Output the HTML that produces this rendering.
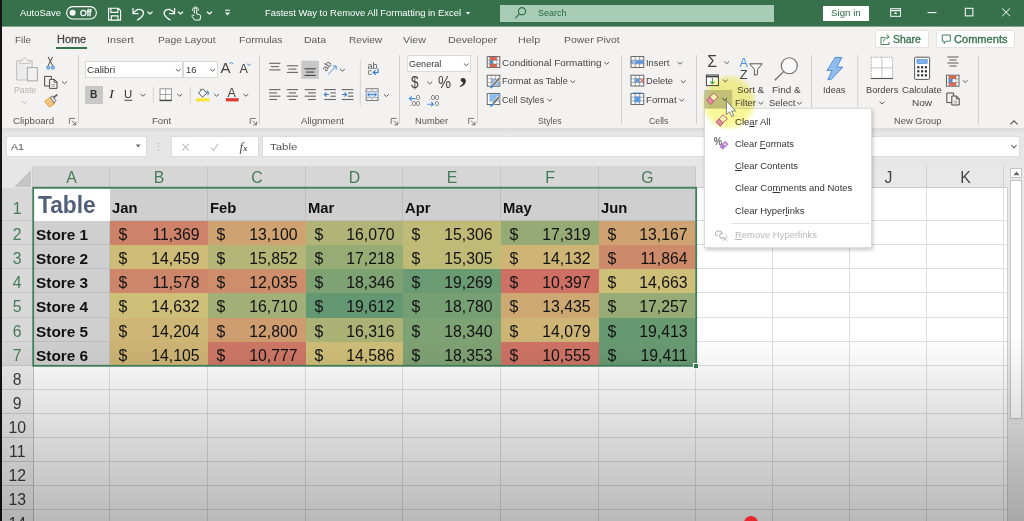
<!DOCTYPE html>
<html lang="en">
<head>
<meta charset="utf-8">
<title>Fastest Way to Remove All Formatting in Excel</title>
<style>
*{box-sizing:border-box;margin:0;padding:0}
html,body{width:1024px;height:521px;overflow:hidden;background:#fff}
body{font-family:"Liberation Sans",sans-serif;font-size:11px;color:#444;position:relative}
#app{position:absolute;left:0;top:0;width:1024px;height:521px;overflow:hidden;background:#fff}
#app div,#app span,#app svg,#app b,#app i{position:absolute}
#app b,#app i{font-style:normal;font-weight:normal}
.lb{white-space:nowrap;transform-origin:0 50%}
.lb u{text-decoration:underline;text-underline-offset:1px}
#title{left:0;top:0;width:1024px;height:26px;background:#36714c}
#search{left:499.5px;top:4.5px;width:274px;height:17.5px;background:#a9ccb7}
#signin{left:823px;top:5.5px;width:46px;height:15px;background:#fff}
#tabs{left:0;top:26px;width:1024px;height:26px;background:#f3f2f1}
#homeul{left:56.2px;top:20.6px;width:30.4px;height:2.6px;background:#35734f}
.btn{background:#fff;border:1px solid #e4e2e0;border-radius:2px}
#ribbon{left:0;top:52px;width:1024px;height:76px;background:#f3f2f1}
.sep{top:55px;width:1px;height:69px;background:#d2d0ce}
.inp{background:#fff;border:1px solid #dadada}
#ribshadow{left:0;top:128px;width:1024px;height:5px;background:linear-gradient(#dcdcdc,#e4e4e4)}
#fbar{left:0;top:132px;width:1024px;height:34px;background:#e6e6e6}
#fbar .box{background:#fff;border:1px solid #dcdcdc;top:4.4px;height:20.6px}
.ch{top:165px;height:23px;background:#e8e8e8;border-right:1px solid #cfcfcf;border-bottom:1px solid #cbcbcb;color:#444;font-size:15.8px;line-height:26.6px;text-align:center;padding-left:1px}
.ch.sel{background:#d6d6d6;color:#467a5a;border-right-color:#c6c6c6}
.rh{left:0;width:33.5px;background:#e8e8e8;border-bottom:1px solid #cfcfcf;border-right:1px solid #c4c4c4;color:#3c3c3c;font-size:15.8px;text-align:center;padding-left:2px}
.rh.sel{background:#d8d8d8;color:#467a5a;border-bottom-color:#c8c8c8}
.vl{top:188px;width:1px;height:333px;background:#dedede}
.hl{left:33px;width:974px;height:1px;background:#dedede}
.dc{color:#121212;font-size:15.8px}
.dc i{left:8.5px;top:1px;line-height:25px}
.dc b{right:8.4px;top:1px;line-height:25px}
.mh{background:#cfcfcf;color:#111;font-weight:bold;font-size:14.8px}
.mh span{left:2px;bottom:3px;line-height:18px}
.st{left:33px;width:76px;background:#cfcfcf;color:#111;font-weight:bold;font-size:15.4px}
.st span{left:3px;top:1px;line-height:25px;white-space:nowrap}
#menu{left:703.6px;top:108px;width:168px;height:140px;background:#fff;border:1px solid #dcdcdc;box-shadow:1px 2px 4px rgba(0,0,0,.22)}
</style>
</head>
<body>
<div id="app">

<!-- ===== sheet ===== -->
<div id="sheet" style="left:0;top:0;width:1024px;height:521px">
<div class="vl" style="left:109px"></div>
<div class="vl" style="left:207px"></div>
<div class="vl" style="left:305px"></div>
<div class="vl" style="left:402px"></div>
<div class="vl" style="left:500px"></div>
<div class="vl" style="left:598px"></div>
<div class="vl" style="left:695px"></div>
<div class="vl" style="left:772px"></div>
<div class="vl" style="left:849px"></div>
<div class="vl" style="left:926px"></div>
<div class="vl" style="left:1003px"></div>
<div class="hl" style="top:220px"></div>
<div class="hl" style="top:244px"></div>
<div class="hl" style="top:268px"></div>
<div class="hl" style="top:292px"></div>
<div class="hl" style="top:317px"></div>
<div class="hl" style="top:341px"></div>
<div class="hl" style="top:365px"></div>
<div class="hl" style="top:389px"></div>
<div class="hl" style="top:413px"></div>
<div class="hl" style="top:437px"></div>
<div class="hl" style="top:461px"></div>
<div class="hl" style="top:485px"></div>
<div class="hl" style="top:509px"></div>
<div class="hl" style="top:533px"></div>
<div class="hl" style="top:557px"></div>
<div style="left:33px;top:188px;width:77px;height:33px;background:#c4c4c4"></div>
<div style="left:110px;top:188px;width:586px;height:33px;background:#bdbdbd"></div>
<div style="left:33px;top:221px;width:77px;height:145px;background:#bdbdbd"></div>
<div style="left:33px;top:189px;width:77px;height:32px;background:#fff"></div>
<div style="left:37.6px;top:190.4px;font-size:24.6px;font-weight:bold;color:#50607a;line-height:30px;white-space:nowrap;transform:scaleX(.925);transform-origin:0 50%">Table</div>
<div class="mh" style="left:110px;top:189px;width:97px;height:31px"><span>Jan</span></div>
<div class="dc" style="left:110px;top:221px;width:98px;height:24px;background:#ce8269"><i>$</i><b>11,369</b></div>
<div class="dc" style="left:110px;top:245px;width:98px;height:24px;background:#cebb77"><i>$</i><b>14,459</b></div>
<div class="dc" style="left:110px;top:269px;width:98px;height:24px;background:#ce866a"><i>$</i><b>11,578</b></div>
<div class="dc" style="left:110px;top:293px;width:98px;height:25px;background:#cebf78"><i>$</i><b>14,632</b></div>
<div class="dc" style="left:110px;top:318px;width:98px;height:24px;background:#ceb776"><i>$</i><b>14,204</b></div>
<div class="dc" style="left:110px;top:342px;width:98px;height:24px;background:#ceb575"><i>$</i><b>14,105</b></div>
<div class="mh" style="left:208px;top:189px;width:97px;height:31px"><span>Feb</span></div>
<div class="dc" style="left:208px;top:221px;width:98px;height:24px;background:#cea271"><i>$</i><b>13,100</b></div>
<div class="dc" style="left:208px;top:245px;width:98px;height:24px;background:#b4b677"><i>$</i><b>15,852</b></div>
<div class="dc" style="left:208px;top:269px;width:98px;height:24px;background:#ce8e6c"><i>$</i><b>12,035</b></div>
<div class="dc" style="left:208px;top:293px;width:98px;height:25px;background:#a2af76"><i>$</i><b>16,710</b></div>
<div class="dc" style="left:208px;top:318px;width:98px;height:24px;background:#ce9d6f"><i>$</i><b>12,800</b></div>
<div class="dc" style="left:208px;top:342px;width:98px;height:24px;background:#ce7766"><i>$</i><b>10,777</b></div>
<div class="mh" style="left:306px;top:189px;width:96px;height:31px"><span>Mar</span></div>
<div class="dc" style="left:306px;top:221px;width:97px;height:24px;background:#b0b476"><i>$</i><b>16,070</b></div>
<div class="dc" style="left:306px;top:245px;width:97px;height:24px;background:#97ab75"><i>$</i><b>17,218</b></div>
<div class="dc" style="left:306px;top:269px;width:97px;height:24px;background:#7fa274"><i>$</i><b>18,346</b></div>
<div class="dc" style="left:306px;top:293px;width:97px;height:25px;background:#649872"><i>$</i><b>19,612</b></div>
<div class="dc" style="left:306px;top:318px;width:97px;height:24px;background:#aab276"><i>$</i><b>16,316</b></div>
<div class="dc" style="left:306px;top:342px;width:97px;height:24px;background:#cebe78"><i>$</i><b>14,586</b></div>
<div class="mh" style="left:403px;top:189px;width:97px;height:31px"><span>Apr</span></div>
<div class="dc" style="left:403px;top:221px;width:98px;height:24px;background:#c0ba77"><i>$</i><b>15,306</b></div>
<div class="dc" style="left:403px;top:245px;width:98px;height:24px;background:#c0ba77"><i>$</i><b>15,305</b></div>
<div class="dc" style="left:403px;top:269px;width:98px;height:24px;background:#6b9b72"><i>$</i><b>19,269</b></div>
<div class="dc" style="left:403px;top:293px;width:98px;height:25px;background:#769f73"><i>$</i><b>18,780</b></div>
<div class="dc" style="left:403px;top:318px;width:98px;height:24px;background:#7fa274"><i>$</i><b>18,340</b></div>
<div class="dc" style="left:403px;top:342px;width:98px;height:24px;background:#7fa274"><i>$</i><b>18,353</b></div>
<div class="mh" style="left:501px;top:189px;width:97px;height:31px"><span>May</span></div>
<div class="dc" style="left:501px;top:221px;width:98px;height:24px;background:#95aa75"><i>$</i><b>17,319</b></div>
<div class="dc" style="left:501px;top:245px;width:98px;height:24px;background:#ceb576"><i>$</i><b>14,132</b></div>
<div class="dc" style="left:501px;top:269px;width:98px;height:24px;background:#ce7064"><i>$</i><b>10,397</b></div>
<div class="dc" style="left:501px;top:293px;width:98px;height:25px;background:#cea872"><i>$</i><b>13,435</b></div>
<div class="dc" style="left:501px;top:318px;width:98px;height:24px;background:#ceb475"><i>$</i><b>14,079</b></div>
<div class="dc" style="left:501px;top:342px;width:98px;height:24px;background:#ce7365"><i>$</i><b>10,555</b></div>
<div class="mh" style="left:599px;top:189px;width:96px;height:31px"><span>Jun</span></div>
<div class="dc" style="left:599px;top:221px;width:97px;height:24px;background:#cea371"><i>$</i><b>13,167</b></div>
<div class="dc" style="left:599px;top:245px;width:97px;height:24px;background:#ce8b6b"><i>$</i><b>11,864</b></div>
<div class="dc" style="left:599px;top:269px;width:97px;height:24px;background:#cebf78"><i>$</i><b>14,663</b></div>
<div class="dc" style="left:599px;top:293px;width:97px;height:25px;background:#96ab75"><i>$</i><b>17,257</b></div>
<div class="dc" style="left:599px;top:318px;width:97px;height:24px;background:#689a72"><i>$</i><b>19,413</b></div>
<div class="dc" style="left:599px;top:342px;width:97px;height:24px;background:#689a72"><i>$</i><b>19,411</b></div>
<div class="st" style="top:221px;height:23.0px"><span>Store 1</span></div>
<div class="st" style="top:245px;height:23.0px"><span>Store 2</span></div>
<div class="st" style="top:269px;height:23.0px"><span>Store 3</span></div>
<div class="st" style="top:293px;height:24.0px"><span>Store 4</span></div>
<div class="st" style="top:318px;height:23.0px"><span>Store 5</span></div>
<div class="st" style="top:342px;height:23.0px"><span>Store 6</span></div>
<div id="corner" style="left:0;top:165px;width:33px;height:23px;background:#e6e6e6;border-right:1px solid #cdcdcd"></div>
<svg style="left:14px;top:170px" width="17" height="17"><polygon points="17,0 17,17 0,17" fill="#c4c4c4"/></svg>
<div class="ch sel" style="left:33px;width:77px">A</div>
<div class="ch sel" style="left:110px;width:98px">B</div>
<div class="ch sel" style="left:208px;width:98px">C</div>
<div class="ch sel" style="left:306px;width:97px">D</div>
<div class="ch sel" style="left:403px;width:98px">E</div>
<div class="ch sel" style="left:501px;width:98px">F</div>
<div class="ch sel" style="left:599px;width:97px">G</div>
<div class="ch" style="left:696px;width:77px">H</div>
<div class="ch" style="left:773px;width:77px">I</div>
<div class="ch" style="left:850px;width:77px">J</div>
<div class="ch" style="left:927px;width:77px">K</div>
<div class="ch" style="left:1004px;width:4px"></div>
<div class="rh sel" style="top:188px;height:33.0px;line-height:41.0px">1</div>
<div class="rh sel" style="top:221px;height:24.0px;line-height:27.6px">2</div>
<div class="rh sel" style="top:245px;height:24.0px;line-height:27.6px">3</div>
<div class="rh sel" style="top:269px;height:24.0px;line-height:27.6px">4</div>
<div class="rh sel" style="top:293px;height:25.0px;line-height:28.6px">5</div>
<div class="rh sel" style="top:318px;height:24.0px;line-height:27.6px">6</div>
<div class="rh sel" style="top:342px;height:24.0px;line-height:27.6px">7</div>
<div class="rh" style="background:#ececec;top:366px;height:24.0px;line-height:27.6px">8</div>
<div class="rh" style="background:#efefef;top:390px;height:24.0px;line-height:27.6px">9</div>
<div class="rh" style="background:#f1f1f1;top:414px;height:24.0px;line-height:27.6px">10</div>
<div class="rh" style="background:#f3f3f3;top:438px;height:24.0px;line-height:27.6px">11</div>
<div class="rh" style="background:#f5f5f5;top:462px;height:24.0px;line-height:27.6px">12</div>
<div class="rh" style="background:#f6f6f6;top:486px;height:24.0px;line-height:27.6px">13</div>
<div class="rh" style="background:#f7f7f7;top:510px;height:24.0px;line-height:27.6px">14</div>
<svg style="left:0;top:0" width="1024" height="521"><rect x="33.2" y="187.7" width="663" height="178.1" fill="none" stroke="#41805c" stroke-width="1.8"/></svg>
<div style="left:693px;top:362.6px;width:6.4px;height:6.4px;background:#3c7a55;border:1px solid #fff"></div>
<!-- vscroll -->
<div style="left:1007px;top:165px;width:17px;height:356px;background:#e8e8e8"></div><div style="left:1007px;top:187.6px;width:1px;height:334px;background:#cdcdcd"></div>
<div style="left:1010.4px;top:179.6px;width:11.6px;height:239.4px;background:#fff;border:1px solid #c4c4c4"></div>
<div style="left:1010.4px;top:167.6px;width:11.6px;height:10.8px;background:#fff;border:1px solid #c4c4c4"></div>
<svg style="left:1013px;top:170.6px" width="7" height="5"><polygon points="3.5,0.5 6.6,4.2 0.4,4.2" fill="#666"/></svg>
</div>

<div id="title">
  <div id="search"></div>
  <div id="signin"></div>
</div>
<div id="tabs">
  <div style="left:0;top:0;width:1024px;height:1px;background:#82a58e"></div>
  <div id="homeul"></div>
  <div class="btn" style="left:875px;top:4px;width:54px;height:18px"></div>
  <div class="btn" style="left:936px;top:4px;width:79px;height:18px"></div>
</div>
<div id="ribbon"></div>
<div class="sep" style="left:78px"></div>
<div class="sep" style="left:259px"></div>
<div class="sep" style="left:399.4px"></div>
<div class="sep" style="left:477px"></div>
<div class="sep" style="left:621.2px"></div>
<div class="sep" style="left:696.4px"></div>
<div id="ribshadow"></div>
<div id="fbar">
  <div class="box" style="left:6px;width:141px"></div>
  <div class="box" style="left:171px;width:88px"></div>
  <div class="box" style="left:262px;width:758px"></div>
</div>
<!-- ribbon boxes -->
<div class="inp" style="left:85.2px;top:60.6px;width:98px;height:17.8px"></div>
<div class="inp" style="left:183.4px;top:60.6px;width:34.2px;height:17.8px"></div>
<div class="inp" style="left:407.2px;top:54.6px;width:64.2px;height:17.6px"></div>
<div style="left:85px;top:86.2px;width:17.6px;height:18px;background:#c8c8c8"></div>

<svg style="left:0;top:0" width="1024" height="170" viewBox="0 0 1024 170">
<rect x="66.6" y="6.6" width="29.8" height="12.4" rx="6.2" stroke="#fff" fill="none" stroke-width="1.1"/><circle cx="72.6" cy="12.8" r="3" fill="#fff"/><path d="M108.6 8.3 H118.3 L120.6 10.6 V20.1 H108.6 Z M110.9 8.3 V12.4 H117.8 V8.3 M111.3 20.1 V15.9 H118 V20.1" stroke="#fff" fill="none" stroke-width="1.1"/><path d="M133 8 V13.6 H138.6 M133.4 13.2 C135.5 9.6 139.5 8.4 142 10.2 C145 12.4 143.6 16.8 137 20.2" stroke="#fff" fill="none" stroke-width="1.2"/><path d="M147.5 11.7 L150.0 13.9 L152.5 11.7" fill="none" stroke="#fff" stroke-width="1.3"/><path d="M174.6 8 V13.6 H169 M174.2 13.2 C172.1 9.6 168.1 8.4 165.6 10.2 C162.6 12.4 164 16.8 170.6 20.2" stroke="#fff" fill="none" stroke-width="1.2"/><path d="M178.0 11.7 L180.5 13.9 L183.0 11.7" fill="none" stroke="#fff" stroke-width="1.3"/><path d="M194.3 13.5 V9.3 a1.2 1.2 0 0 1 2.4 0 V14 l3 .8 a1.2 1.2 0 0 1 .9 1.3 l-.6 3.9 H194.6 l-2.6-3.6 a1 1 0 0 1 1.5-1.2 l.8 .8" stroke="#fff" fill="none" stroke-width="1"/><path d="M192.6 10.8 a3 3 0 1 1 5.8 0" stroke="#fff" fill="none" stroke-width="0.9"/><path d="M207.0 11.7 L209.5 13.9 L212.0 11.7" fill="none" stroke="#fff" stroke-width="1.3"/><path d="M225 10.2 H230" stroke="#fff" stroke-width="1"/><path d="M225 12.6 H230 L227.5 15.4 Z" fill="#fff"/><path d="M465.8 12 H470.2 L468 14.6 Z" fill="#fff"/><circle cx="522" cy="11.2" r="3.6" fill="none" stroke="#2b6a45" stroke-width="1.1"/><path d="M519.4 13.9 L515.2 18.4" stroke="#2b6a45" stroke-width="1.1"/><rect x="890.7" y="8.7" width="9.8" height="7.6" stroke="#fff" fill="none" stroke-width="1"/><path d="M890.7 10.6 H900.5" stroke="#fff" stroke-width="1.2"/><path d="M895.6 11.8 l-1.8 2.2 h3.6 Z" fill="#fff"/><path d="M927.5 12.6 H936.5" stroke="#fff" stroke-width="1"/><rect x="965.3" y="8.3" width="7.6" height="7.6" stroke="#fff" fill="none" stroke-width="1"/><path d="M1002.2 8.4 L1010 16.2 M1010 8.4 L1002.2 16.2" stroke="#fff" stroke-width="1"/><path d="M884.5 37.5 H881 V44.5 H889 V42" stroke="#44805d" fill="none" stroke-width="1"/><path d="M883.6 41.5 C884 38.5 886 36.8 888.6 36.8 M886.6 34.4 L889.4 36.8 L886.6 39.2" stroke="#44805d" fill="none" stroke-width="1"/><path d="M942.3 35 H950.3 V41.2 H946.2 L944.2 43.6 V41.2 H942.3 Z" stroke="#44805d" fill="none" stroke-width="1"/>
<rect x="16.6" y="60.6" width="15.6" height="19.4" rx="1" fill="#ececec" stroke="#c2c2c2" stroke-width="1.1"/><path d="M19.8 63.4 V60.4 H22.4 C22.6 57.4 26.8 57.4 27 60.4 H29.8 V63.4 Z" fill="#f3f2f1" stroke="#c2c2c2" stroke-width="1"/><rect x="27.4" y="67.6" width="10" height="13.2" fill="#f1f1f1" stroke="#b2b2b2" stroke-width="1.2"/><path d="M22.2 101.3 L24.6 103.5 L27.0 101.3" fill="none" stroke="#c0c0c0" stroke-width="1.0"/><path d="M48.1 56.8 L52.6 65.8 M52.5 56.8 L48 65.8" stroke="#4a4a4a" stroke-width="1"/><circle cx="48.3" cy="67.6" r="1.5" fill="#a9cdf2" stroke="#3b7fd0" stroke-width="1"/><circle cx="52.9" cy="67.6" r="1.5" fill="#a9cdf2" stroke="#3b7fd0" stroke-width="1"/><path d="M49.4 86 H44.6 V76.4 H51.4 V79" fill="none" stroke="#4a4a4a" stroke-width="1"/><path d="M49.6 79.4 H54.4 L57 82 V88.4 H49.6 Z M54.2 79.6 V82.2 H56.8" fill="none" stroke="#4a4a4a" stroke-width="1"/><path d="M51.6 84.6 H55 M51.6 86.2 H55" stroke="#8a8a8a" stroke-width="0.7"/><path d="M62.1 81.5 L64.5 83.7 L66.9 81.5" fill="none" stroke="#5c5c5c" stroke-width="1.0"/><path d="M44.8 101.2 L50.6 97.2 L54.2 103.8 L49.4 107 Z" fill="#f8cf95" stroke="#e89224" stroke-width="1" stroke-linejoin="round"/><path d="M47.6 102.4 L50.8 105.2 M49.6 100.6 L52.6 104" stroke="#e89224" stroke-width="0.7"/><path d="M50.4 97.4 L53 95.8 L55.8 100.8 L54 103.2 Z" fill="#e9e9e9" stroke="#666" stroke-width="0.9" stroke-linejoin="round"/><path d="M53.8 97.4 L56.8 95" stroke="#666" stroke-width="1.8" stroke-linecap="round"/><path d="M69.4 123.9 V118.4 H74.9" fill="none" stroke="#6a6a6a" stroke-width="0.9"/><path d="M71.7 120.7 L75.60000000000001 124.60000000000001 M75.80000000000001 121.60000000000001 V124.80000000000001 H72.60000000000001" fill="none" stroke="#6a6a6a" stroke-width="0.9"/><path d="M175.9 69.1 L178.3 71.2 L180.7 69.1" fill="none" stroke="#5c5c5c" stroke-width="1.0"/><path d="M210.2 69.1 L212.6 71.2 L215.0 69.1" fill="none" stroke="#5c5c5c" stroke-width="1.0"/><path d="M229.6 64 L231.4 62 L233.2 64" fill="none" stroke="#3b7fd0" stroke-width="0.9"/><path d="M247.2 63.6 L249 65.6 L250.8 63.6" fill="none" stroke="#3b7fd0" stroke-width="0.9"/><path d="M124.6 100.3 H132.2" stroke="#333" stroke-width="0.9"/><path d="M140.6 94.1 L143.0 96.2 L145.4 94.1" fill="none" stroke="#5c5c5c" stroke-width="1.0"/><path d="M153.3 87 V103.4 M190.3 87 V103.4" stroke="#d4d2d0" stroke-width="1"/><rect x="160" y="88.8" width="11.4" height="11.4" fill="#fff" stroke="#8c8c8c" stroke-width="0.9"/><path d="M165.7 88.8 V100.2 M160 94.5 H171.4" stroke="#8c8c8c" stroke-width="0.8"/><path d="M159.6 100.5 H171.8" stroke="#444" stroke-width="1.3"/><path d="M177.3 94.1 L179.7 96.2 L182.1 94.1" fill="none" stroke="#5c5c5c" stroke-width="1.0"/><path d="M198.6 93 L202.6 88.8 L206.8 93 L202.6 97 Z" fill="#fff" stroke="#4a4a4a" stroke-width="1"/><path d="M201.4 90 L200.2 88.8" stroke="#4a4a4a" stroke-width="1"/><path d="M207.2 91 c1.3 1.6 1.7 2.8 .2 3.8" fill="none" stroke="#3b7fd0" stroke-width="1.3"/><rect x="196.2" y="98.2" width="13.2" height="3.2" fill="#f5e53a"/><path d="M214.2 94.1 L216.6 96.2 L219.0 94.1" fill="none" stroke="#5c5c5c" stroke-width="1.0"/><rect x="225.8" y="98.2" width="12.8" height="3.2" fill="#e0382e"/><path d="M243.5 94.1 L245.9 96.2 L248.3 94.1" fill="none" stroke="#5c5c5c" stroke-width="1.0"/><path d="M250.2 123.9 V118.4 H255.7" fill="none" stroke="#6a6a6a" stroke-width="0.9"/><path d="M252.5 120.7 L256.4 124.60000000000001 M256.59999999999997 121.60000000000001 V124.80000000000001 H253.39999999999998" fill="none" stroke="#6a6a6a" stroke-width="0.9"/><path d="M269.2 63.3 H280.4" stroke="#666" stroke-width="1.1"/><path d="M270.8 66.6 H278.8" stroke="#666" stroke-width="1.1"/><path d="M269.2 69.9 H280.4" stroke="#666" stroke-width="1.1"/><path d="M286.8 65.8 H298" stroke="#666" stroke-width="1.1"/><path d="M288.4 69.1 H296.4" stroke="#666" stroke-width="1.1"/><path d="M286.8 72.4 H298" stroke="#666" stroke-width="1.1"/><rect x="301.3" y="60.7" width="17.6" height="18.2" fill="#c8c8c8"/><path d="M304.6 68.8 H315.8" stroke="#444" stroke-width="1.1"/><path d="M306.2 72.1 H314.2" stroke="#444" stroke-width="1.1"/><path d="M304.6 75.4 H315.8" stroke="#444" stroke-width="1.1"/><path d="M328 74.6 L336 66.2 M332.6 66 H336.2 V69.6" fill="none" stroke="#4a90dc" stroke-width="0.95"/><path d="M340.0 69.1 L342.4 71.2 L344.8 69.1" fill="none" stroke="#5c5c5c" stroke-width="1.0"/><path d="M360.3 59.8 V105.5" stroke="#d4d2d0" stroke-width="1"/><path d="M378 68.4 V72.6 H373.6 M375.6 70.4 L373.2 72.6 L375.6 74.8" fill="none" stroke="#3b7fd0" stroke-width="1.2"/><path d="M269.2 89.6 H280.4" stroke="#666" stroke-width="1.1"/><path d="M269.2 92.9 H277" stroke="#666" stroke-width="1.1"/><path d="M269.2 96.2 H280.4" stroke="#666" stroke-width="1.1"/><path d="M269.2 99.5 H277" stroke="#666" stroke-width="1.1"/><path d="M286.8 89.6 H298" stroke="#666" stroke-width="1.1"/><path d="M288.8 92.9 H296" stroke="#666" stroke-width="1.1"/><path d="M286.8 96.2 H298" stroke="#666" stroke-width="1.1"/><path d="M288.8 99.5 H296" stroke="#666" stroke-width="1.1"/><path d="M304.6 89.6 H315.8" stroke="#666" stroke-width="1.1"/><path d="M308 92.9 H315.8" stroke="#666" stroke-width="1.1"/><path d="M304.6 96.2 H315.8" stroke="#666" stroke-width="1.1"/><path d="M308 99.5 H315.8" stroke="#666" stroke-width="1.1"/><path d="M324.2 89.6 H335.8" stroke="#666" stroke-width="1.1"/><path d="M330.4 92.9 H335.8" stroke="#666" stroke-width="1.1"/><path d="M330.4 96.2 H335.8" stroke="#666" stroke-width="1.1"/><path d="M324.2 99.5 H335.8" stroke="#666" stroke-width="1.1"/><path d="M324.4 94.5 H329 M326.4 92.5 L324.4 94.5 L326.4 96.5" fill="none" stroke="#3b7fd0" stroke-width="1.1"/><path d="M341.8 89.6 H353.4" stroke="#666" stroke-width="1.1"/><path d="M348 92.9 H353.4" stroke="#666" stroke-width="1.1"/><path d="M348 96.2 H353.4" stroke="#666" stroke-width="1.1"/><path d="M341.8 99.5 H353.4" stroke="#666" stroke-width="1.1"/><path d="M341.8 94.5 H346.6 M344.6 92.5 L346.6 94.5 L344.6 96.5" fill="none" stroke="#3b7fd0" stroke-width="1.1"/><rect x="366.2" y="88.8" width="11.8" height="11.6" fill="#fff" stroke="#666" stroke-width="0.9"/><rect x="366.6" y="91.6" width="11" height="6" fill="#cfe2f7"/><path d="M366.2 91.4 H378 M366.2 97.8 H378 M372.1 88.8 V91.4 M372.1 97.8 V100.4" stroke="#888" stroke-width="0.7"/><path d="M367.8 94.6 H376.4 M369.6 92.9 L367.8 94.6 L369.6 96.3 M374.6 92.9 L376.4 94.6 L374.6 96.3" fill="none" stroke="#3b7fd0" stroke-width="1"/><path d="M384.0 94.3 L386.4 96.5 L388.8 94.3" fill="none" stroke="#5c5c5c" stroke-width="1.0"/><path d="M391.2 123.9 V118.4 H396.7" fill="none" stroke="#6a6a6a" stroke-width="0.9"/><path d="M393.5 120.7 L397.4 124.60000000000001 M397.59999999999997 121.60000000000001 V124.80000000000001 H394.4" fill="none" stroke="#6a6a6a" stroke-width="0.9"/><path d="M463.9 63.5 L466.3 65.7 L468.7 63.5" fill="none" stroke="#5c5c5c" stroke-width="1.0"/><path d="M427.3 81.7 L429.7 83.9 L432.1 81.7" fill="none" stroke="#5c5c5c" stroke-width="1.0"/><path d="M409.4 98.6 H415.6 M411.6 96.4 L409.4 98.6 L411.6 100.8" fill="none" stroke="#4a90dc" stroke-width="1.1"/><path d="M427.2 104.2 H433.4 M431.2 102 L433.4 104.2 L431.2 106.4" fill="none" stroke="#4a90dc" stroke-width="1.1"/><path d="M468.6 123.9 V118.4 H474.1" fill="none" stroke="#6a6a6a" stroke-width="0.9"/><path d="M470.90000000000003 120.7 L474.8 124.60000000000001 M475.0 121.60000000000001 V124.80000000000001 H471.8" fill="none" stroke="#6a6a6a" stroke-width="0.9"/><rect x="487.2" y="56.6" width="12.6" height="11" fill="#fff" stroke="#555" stroke-width="0.9"/><rect x="489.8" y="57.0" width="7" height="3.3" fill="#e8614d"/><rect x="489.8" y="64.0" width="7" height="3.2" fill="#e8614d"/><rect x="489.8" y="60.5" width="3.2" height="3.3" fill="#4a86d8"/><path d="M487.2 60.300000000000004 H499.8 M487.2 63.9 H499.8 M489.7 56.6 V67.6 M493.09999999999997 56.6 V67.6 M496.9 56.6 V67.6" stroke="#777" stroke-width="0.55"/><path d="M604.2 62.1 L606.6 64.2 L609.0 62.1" fill="none" stroke="#5c5c5c" stroke-width="1.0"/><rect x="487.2" y="75.2" width="12.6" height="11" fill="#fff" stroke="#555" stroke-width="0.9"/><rect x="491.4" y="79" width="8" height="6.8" fill="#8bbcf0"/><path d="M487.2 78.8 H499.8 M487.2 82.4 H499.8 M491.2 75.2 V86.2 M495.4 75.2 V86.2" stroke="#777" stroke-width="0.55"/><path d="M493 85.2 L499.2 78.6" stroke="#fff" stroke-width="3.4"/><path d="M493 85.2 L499.2 78.6" stroke="#7a7a7a" stroke-width="2.2"/><path d="M490.4 87.8 c.4 -2 1.6 -2.8 3 -2 c-.4 1.6 -1.6 2.2 -3 2z" fill="#3b86d6" stroke="#3b86d6" stroke-width="0.6"/><path d="M570.4 80.5 L572.8 82.7 L575.2 80.5" fill="none" stroke="#5c5c5c" stroke-width="1.0"/><rect x="487.2" y="93.6" width="12.6" height="11" fill="#fff" stroke="#555" stroke-width="0.9"/><rect x="489.4" y="94.2" width="10" height="7.4" fill="#8bbcf0"/><path d="M493 103.6 L499.2 97" stroke="#fff" stroke-width="3.4"/><path d="M493 103.6 L499.2 97" stroke="#7a7a7a" stroke-width="2.2"/><path d="M490.4 106.2 c.4 -2 1.6 -2.8 3 -2 c-.4 1.6 -1.6 2.2 -3 2z" fill="#3b86d6" stroke="#3b86d6" stroke-width="0.6"/><path d="M547.4 99.0 L549.8 101.2 L552.2 99.0" fill="none" stroke="#5c5c5c" stroke-width="1.0"/><rect x="631" y="56.6" width="12.8" height="10.8" fill="#fff" stroke="#555" stroke-width="0.9"/><path d="M631 60.2 H643.8 M631 63.800000000000004 H643.8 M635.2 56.6 V67.4 M639.6 56.6 V67.4" stroke="#666" stroke-width="0.6"/><rect x="635.4" y="60.3" width="8.2" height="3.4" fill="#5b9be0"/><path d="M631.2 62 H635 M632.8 60.4 L631.2 62 L632.8 63.6" fill="none" stroke="#3b7fd0" stroke-width="0.9"/><path d="M677.6 62.1 L680.0 64.2 L682.4 62.1" fill="none" stroke="#5c5c5c" stroke-width="1.0"/><rect x="631" y="75.2" width="12.8" height="10.8" fill="#fff" stroke="#555" stroke-width="0.9"/><path d="M631 78.8 H643.8 M631 82.4 H643.8 M635.2 75.2 V86.0 M639.6 75.2 V86.0" stroke="#666" stroke-width="0.6"/><rect x="634.6" y="78.6" width="4.6" height="3.8" fill="#5b9be0"/><path d="M640.2 78.6 L643.8 82.4 M643.8 78.6 L640.2 82.4" stroke="#e0382e" stroke-width="1"/><path d="M680.9 80.5 L683.3 82.7 L685.7 80.5" fill="none" stroke="#5c5c5c" stroke-width="1.0"/><rect x="631" y="93.6" width="12.8" height="10.8" fill="#fff" stroke="#555" stroke-width="0.9"/><path d="M631 97.19999999999999 H643.8 M631 100.8 H643.8 M635.2 93.6 V104.39999999999999 M639.6 93.6 V104.39999999999999" stroke="#666" stroke-width="0.6"/><rect x="634.4" y="96.4" width="6" height="6" fill="#5b9be0"/><path d="M633 93 H642" stroke="#3b7fd0" stroke-width="0.9"/><path d="M679.3 99.0 L681.7 101.2 L684.1 99.0" fill="none" stroke="#5c5c5c" stroke-width="1.0"/><path d="M724.3 61.5 L726.7 63.7 L729.1 61.5" fill="none" stroke="#5c5c5c" stroke-width="1.0"/><rect x="706.4" y="75" width="12" height="10.6" fill="#fff" stroke="#444" stroke-width="1"/><path d="M706.4 76.6 H718.4" stroke="#444" stroke-width="1.6"/><path d="M712.4 78 V83.6 M710.2 81.6 L712.4 83.8 L714.6 81.6" fill="none" stroke="#3aa05a" stroke-width="1.1"/><path d="M722.9 79.7 L725.3 81.9 L727.7 79.7" fill="none" stroke="#5c5c5c" stroke-width="1.0"/><rect x="704" y="90" width="28.2" height="18.7" fill="#c6c6c6"/><path d="M722.4 98.3 L724.8 100.5 L727.2 98.3" fill="none" stroke="#333" stroke-width="1.0"/><path d="M749.6 63.8 H762.2 L757.4 69.4 V74.6 L754.4 75.2 V69.4 Z" fill="#f9f9f9" stroke="#555" stroke-width="1"/><path d="M758.4 102.1 L760.8 104.2 L763.2 102.1" fill="none" stroke="#5c5c5c" stroke-width="1.0"/><path d="M797.0 102.1 L799.4 104.2 L801.8 102.1" fill="none" stroke="#5c5c5c" stroke-width="1.0"/><circle cx="789.3" cy="65.8" r="8" fill="#f8f8f8" stroke="#6a6a6a" stroke-width="1.1"/><path d="M783.6 71.6 L774.8 80.2" stroke="#6a6a6a" stroke-width="1.2"/><path d="M811.5 55 V124 M857.7 55 V124 M978.4 55 V124" stroke="#d2d0ce" stroke-width="1"/><path d="M835.2 57.4 H841.9 L836.8 67.1 H842.9 L831.1 79.6 H827.8 L832.1 70.5 H827 Z" fill="#8fbdee" stroke="#4a86cf" stroke-width="0.9" stroke-linejoin="round"/><rect x="871.2" y="57.2" width="21.4" height="21.2" fill="#fff" stroke="#9a9a9a" stroke-width="0.9" stroke-dasharray="1.2 1"/><path d="M881.9 57.2 V78.4 M871.2 67.8 H892.6" stroke="#b5b5b5" stroke-width="0.8"/><path d="M870.8 78.5 H893" stroke="#555" stroke-width="1.1"/><path d="M879.6 101.7 L882.0 103.9 L884.4 101.7" fill="none" stroke="#5c5c5c" stroke-width="1.0"/><rect x="914.6" y="57.2" width="15" height="22.2" rx="1" fill="#fff" stroke="#555" stroke-width="1"/><rect x="917" y="59.6" width="10.2" height="3.8" fill="#7fb2ea" stroke="#3b7fd0" stroke-width="0.6"/><rect x="917.2" y="66.2" width="2.2" height="2.2" fill="#333"/><rect x="921.0" y="66.2" width="2.2" height="2.2" fill="#333"/><rect x="924.8" y="66.2" width="2.2" height="2.2" fill="#333"/><rect x="917.2" y="70.2" width="2.2" height="2.2" fill="#333"/><rect x="921.0" y="70.2" width="2.2" height="2.2" fill="#333"/><rect x="924.8" y="70.2" width="2.2" height="2.2" fill="#333"/><rect x="917.2" y="74.2" width="2.2" height="2.2" fill="#333"/><rect x="921.0" y="74.2" width="2.2" height="2.2" fill="#333"/><rect x="924.8" y="74.2" width="2.2" height="2.2" fill="#333"/><path d="M947.4 57 H958.6" stroke="#666" stroke-width="1.1"/><path d="M949.4 60 H956.6" stroke="#666" stroke-width="1.1"/><path d="M947.4 63 H958.6" stroke="#666" stroke-width="1.1"/><path d="M949.4 66 H956.6" stroke="#666" stroke-width="1.1"/><rect x="946.4" y="75.2" width="12.6" height="11" fill="#fff" stroke="#555" stroke-width="0.9"/><rect x="949.0" y="75.60000000000001" width="7" height="3.3" fill="#e8614d"/><rect x="949.0" y="82.60000000000001" width="7" height="3.2" fill="#e8614d"/><rect x="949.0" y="79.10000000000001" width="3.2" height="3.3" fill="#4a86d8"/><path d="M946.4 78.9 H959.0 M946.4 82.5 H959.0 M948.9 75.2 V86.2 M952.3 75.2 V86.2 M956.1 75.2 V86.2" stroke="#777" stroke-width="0.55"/><path d="M962.8 80.3 L965.2 82.5 L967.6 80.3" fill="none" stroke="#5c5c5c" stroke-width="1.0"/><path d="M951.6 102.6 H946.8 V93 H953.6 V95.6" fill="none" stroke="#4a4a4a" stroke-width="1"/><path d="M951.8 96 H956.6 L959.2 98.6 V105 H951.8 Z M956.4 96.2 V98.8 H959" fill="none" stroke="#4a4a4a" stroke-width="1"/><path d="M953.8 101.2 H957.2 M953.8 102.8 H957.2" stroke="#8a8a8a" stroke-width="0.7"/><path d="M1010.4 124.4 L1014 120.8 L1017.6 124.4" fill="none" stroke="#555" stroke-width="1.1"/>
<!-- formula bar icons -->
<path d="M135.8 144.6 H140.6 L138.2 147.4 Z" fill="#666"/>
<path d="M158.4 143.3 v.01 M158.4 146.8 v.01 M158.4 150.3 v.01" stroke="#aaa" stroke-width="1.3" stroke-linecap="round"/>
<path d="M182.4 143.9 L188.8 150.5 M188.8 143.9 L182.4 150.5" stroke="#c4c4c4" stroke-width="1.1"/>
<path d="M211 147.6 L213.4 150.6 L218.2 143.6" fill="none" stroke="#c4c4c4" stroke-width="1.1"/>
<path d="M1011.4 145 L1014 147.8 L1016.6 145" fill="none" stroke="#555" stroke-width="1.1"/>
</svg>

<!-- icon-like letters (real text) -->
<span class="lb" style="left:220.6px;top:59.4px;font-size:15px;line-height:18px;color:#444">A</span>
<span class="lb" style="left:239.6px;top:61.6px;font-size:12.5px;line-height:15px;color:#444">A</span>
<span class="lb" style="left:227.6px;top:86px;font-size:12.5px;line-height:15px;color:#444">A</span>
<span class="lb" style="left:707.2px;top:52.6px;font-size:16px;line-height:18px;color:#444">Σ</span>
<span class="lb" style="left:739.6px;top:56.2px;font-size:12.5px;line-height:15px;color:#4a92dc">A</span>
<span class="lb" style="left:739.8px;top:66.8px;font-size:12.8px;line-height:15px;color:#4a4a4a">Z</span>
<span class="lb" style="left:459.6px;top:56.8px;font-size:30px;line-height:30px;color:#333;font-family:'Liberation Serif',serif;font-weight:bold">,</span>
<span class="lb" style="left:367.6px;top:62.2px;font-size:9px;line-height:9px;color:#555">ab</span>
<span class="lb" style="left:367.6px;top:68.4px;font-size:9px;line-height:9px;color:#555">c</span>
<span class="lb" style="left:322.2px;top:61.8px;font-size:9px;line-height:9px;color:#555;transform:rotate(-58deg);transform-origin:50% 50%">ab</span>
<span class="lb" style="left:416.2px;top:94px;font-size:8px;line-height:8px;color:#555;transform:scaleX(.9)">0</span>
<span class="lb" style="left:410.4px;top:100.4px;font-size:8px;line-height:8px;color:#555;transform:scaleX(.9)">.00</span>
<span class="lb" style="left:428.6px;top:94px;font-size:8px;line-height:8px;color:#555;transform:scaleX(.9)">.00</span>
<span class="lb" style="left:434.6px;top:100.4px;font-size:8px;line-height:8px;color:#555;transform:scaleX(.9)">0</span>
<span class="lb" style="left:239.6px;top:139.6px;font-size:13px;line-height:14px;color:#505050;font-family:'Liberation Serif',serif;font-style:italic;font-weight:bold"><i style="position:static;font-style:italic">f</i><span style="position:static;font-size:8.5px">x</span></span>

<span class="lb" style="left:19.5px;top:7.1px;font-size:9.4px;line-height:12px;color:#fff;font-weight:normal;transform:scaleX(1.008);">AutoSave</span>
<span class="lb" style="left:80.2px;top:7.6px;font-size:8.6px;line-height:11px;color:#fff;font-weight:normal;transform:scaleX(0.999);-webkit-text-stroke:0.35px #fff">Off</span>
<span class="lb" style="left:264.7px;top:7.1px;font-size:9.4px;line-height:12px;color:#fff;font-weight:normal;transform:scaleX(1.005);">Fastest Way to Remove All Formatting in Excel</span>
<span class="lb" style="left:538.0px;top:7.1px;font-size:9.4px;line-height:12px;color:#2b6a45;font-weight:normal;transform:scaleX(0.959);">Search</span>
<span class="lb" style="left:831.0px;top:7.1px;font-size:9.4px;line-height:12px;color:#2b6a45;font-weight:normal;transform:scaleX(1.036);">Sign in</span>
<span class="lb" style="left:14.7px;top:32.8px;font-size:9.8px;line-height:13px;color:#5a5a5a;font-weight:normal;transform:scaleX(1.019);">File</span>
<span class="lb" style="left:107.2px;top:32.8px;font-size:9.8px;line-height:13px;color:#5a5a5a;font-weight:normal;transform:scaleX(1.089);">Insert</span>
<span class="lb" style="left:157.8px;top:32.8px;font-size:9.8px;line-height:13px;color:#5a5a5a;font-weight:normal;transform:scaleX(1.048);">Page Layout</span>
<span class="lb" style="left:238.6px;top:32.8px;font-size:9.8px;line-height:13px;color:#5a5a5a;font-weight:normal;transform:scaleX(1.067);">Formulas</span>
<span class="lb" style="left:304.4px;top:32.8px;font-size:9.8px;line-height:13px;color:#5a5a5a;font-weight:normal;transform:scaleX(1.058);">Data</span>
<span class="lb" style="left:349.2px;top:32.8px;font-size:9.8px;line-height:13px;color:#5a5a5a;font-weight:normal;transform:scaleX(1.033);">Review</span>
<span class="lb" style="left:403.3px;top:32.8px;font-size:9.8px;line-height:13px;color:#5a5a5a;font-weight:normal;transform:scaleX(1.087);">View</span>
<span class="lb" style="left:447.8px;top:32.8px;font-size:9.8px;line-height:13px;color:#5a5a5a;font-weight:normal;transform:scaleX(1.097);">Developer</span>
<span class="lb" style="left:518.4px;top:32.8px;font-size:9.8px;line-height:13px;color:#5a5a5a;font-weight:normal;transform:scaleX(1.101);">Help</span>
<span class="lb" style="left:563.5px;top:32.8px;font-size:9.8px;line-height:13px;color:#5a5a5a;font-weight:normal;transform:scaleX(1.067);">Power Pivot</span>
<span class="lb" style="left:56.5px;top:32.8px;font-size:10px;line-height:13px;color:#484848;font-weight:normal;transform:scaleX(1.094);-webkit-text-stroke:0.28px #484848">Home</span>
<span class="lb" style="left:893.0px;top:32.8px;font-size:10.2px;line-height:13px;color:#3a7552;font-weight:normal;transform:scaleX(1.019);-webkit-text-stroke:0.35px #3a7552">Share</span>
<span class="lb" style="left:953.5px;top:32.8px;font-size:10.2px;line-height:13px;color:#3a7552;font-weight:normal;transform:scaleX(1.086);-webkit-text-stroke:0.35px #3a7552">Comments</span>
<span class="lb" style="left:12.6px;top:115.4px;font-size:9.3px;line-height:12px;color:#555;font-weight:normal;transform:scaleX(1.033);">Clipboard</span>
<span class="lb" style="left:152.0px;top:115.4px;font-size:9.3px;line-height:12px;color:#555;font-weight:normal;transform:scaleX(1.032);">Font</span>
<span class="lb" style="left:301.2px;top:115.4px;font-size:9.3px;line-height:12px;color:#555;font-weight:normal;transform:scaleX(1.040);">Alignment</span>
<span class="lb" style="left:415.1px;top:115.4px;font-size:9.3px;line-height:12px;color:#555;font-weight:normal;transform:scaleX(1.001);">Number</span>
<span class="lb" style="left:537.5px;top:115.4px;font-size:9.3px;line-height:12px;color:#555;font-weight:normal;transform:scaleX(0.932);">Styles</span>
<span class="lb" style="left:649.0px;top:115.4px;font-size:9.3px;line-height:12px;color:#555;font-weight:normal;transform:scaleX(0.938);">Cells</span>
<span class="lb" style="left:894.0px;top:115.4px;font-size:9.3px;line-height:12px;color:#555;font-weight:normal;transform:scaleX(1.008);">New Group</span>
<span class="lb" style="left:13.6px;top:84.0px;font-size:9.3px;line-height:12px;color:#b4b4b4;font-weight:normal;transform:scaleX(0.946);">Paste</span>
<span class="lb" style="left:86.8px;top:63.5px;font-size:9.3px;line-height:12px;color:#333;font-weight:normal;transform:scaleX(1.066);">Calibri</span>
<span class="lb" style="left:185.7px;top:63.5px;font-size:9.3px;line-height:12px;color:#333;font-weight:normal;transform:scaleX(0.996);">16</span>
<span class="lb" style="left:408.9px;top:57.9px;font-size:9.3px;line-height:12px;color:#333;font-weight:normal;transform:scaleX(0.976);">General</span>
<span class="lb" style="left:502.1px;top:56.7px;font-size:9.3px;line-height:12px;color:#444;font-weight:normal;transform:scaleX(1.063);">Conditional Formatting</span>
<span class="lb" style="left:502.1px;top:75.0px;font-size:9.3px;line-height:12px;color:#444;font-weight:normal;transform:scaleX(0.989);">Format as Table</span>
<span class="lb" style="left:502.1px;top:93.5px;font-size:9.3px;line-height:12px;color:#444;font-weight:normal;transform:scaleX(0.963);">Cell Styles</span>
<span class="lb" style="left:645.9px;top:56.7px;font-size:9.3px;line-height:12px;color:#444;font-weight:normal;transform:scaleX(1.001);">Insert</span>
<span class="lb" style="left:645.9px;top:75.0px;font-size:9.3px;line-height:12px;color:#444;font-weight:normal;transform:scaleX(1.001);">Delete</span>
<span class="lb" style="left:645.9px;top:93.5px;font-size:9.3px;line-height:12px;color:#444;font-weight:normal;transform:scaleX(1.039);">Format</span>
<span class="lb" style="left:736.8px;top:84.0px;font-size:9.3px;line-height:12px;color:#444;font-weight:normal;transform:scaleX(1.049);">Sort &amp;</span>
<span class="lb" style="left:735.2px;top:96.5px;font-size:9.3px;line-height:12px;color:#444;font-weight:normal;transform:scaleX(1.016);">Filter</span>
<span class="lb" style="left:771.5px;top:84.0px;font-size:9.3px;line-height:12px;color:#444;font-weight:normal;transform:scaleX(1.064);">Find &amp;</span>
<span class="lb" style="left:768.9px;top:96.5px;font-size:9.3px;line-height:12px;color:#444;font-weight:normal;transform:scaleX(1.018);">Select</span>
<span class="lb" style="left:823.2px;top:84.0px;font-size:9.3px;line-height:12px;color:#444;font-weight:normal;transform:scaleX(0.985);">Ideas</span>
<span class="lb" style="left:865.9px;top:84.0px;font-size:9.3px;line-height:12px;color:#444;font-weight:normal;transform:scaleX(0.992);">Borders</span>
<span class="lb" style="left:902.1px;top:84.0px;font-size:9.3px;line-height:12px;color:#444;font-weight:normal;transform:scaleX(1.024);">Calculate</span>
<span class="lb" style="left:911.7px;top:96.5px;font-size:9.3px;line-height:12px;color:#444;font-weight:normal;transform:scaleX(1.080);">Now</span>
<span class="lb" style="left:89.8px;top:87.3px;font-size:11.5px;line-height:15px;color:#333;font-weight:bold;transform:scaleX(0.890);">B</span>
<span class="lb" style="left:108.8px;top:87.3px;font-size:11.5px;line-height:15px;color:#333;font-weight:normal;transform:scaleX(1.301);font-family:'Liberation Serif',serif;font-style:italic">I</span>
<span class="lb" style="left:124.0px;top:86.8px;font-size:11.5px;line-height:15px;color:#333;font-weight:normal;transform:scaleX(0.986);">U</span>
<span class="lb" style="left:411.0px;top:71.6px;font-size:17px;line-height:22px;color:#444;font-weight:normal;transform:scaleX(0.803);">$</span>
<span class="lb" style="left:438.3px;top:71.9px;font-size:16px;line-height:21px;color:#444;font-weight:normal;transform:scaleX(0.920);">%</span>
<span class="lb" style="left:11.2px;top:141.2px;font-size:9.6px;line-height:12px;color:#555;font-weight:normal;transform:scaleX(1.106);">A1</span>
<span class="lb" style="left:270.2px;top:141.2px;font-size:9.6px;line-height:12px;color:#555;font-weight:normal;transform:scaleX(1.190);">Table</span>

<div id="menu"></div>
<div style="left:731.3px;top:223px;width:139px;height:1px;background:#e2e2e2"></div>
<svg style="left:0;top:0" width="1024" height="260" viewBox="0 0 1024 260">
<path d="M719.8 146.5 L725.3 141.3 L728 144.3 L722.8 149.3 Z" fill="#b67fd2" stroke="#a568c6" stroke-width="0.6" stroke-linejoin="round"/><path d="M723.6 144.6 L725.3 143 L726.4 144.2 L724.7 145.8 Z" fill="#f4eaf9"/><path d="M722.6 233.6 C721.8 231.2 718.4 230.4 716.4 231.6 C714.4 233 714.8 235.4 717.6 236" fill="none" stroke="#b4b4b4" stroke-width="1.1" stroke-linecap="round"/><path d="M721.4 233.4 C719.4 234 719 236.4 720.6 237.8 C721.4 238.4 722.2 238.6 723 238.4" fill="none" stroke="#b4b4b4" stroke-width="1.1" stroke-linecap="round"/><path d="M722.8 236.6 L727.4 240.8 M727.4 236.6 L722.8 240.8" stroke="#b4b4b4" stroke-width="1"/><path d="M725.4 233.8 v.01 M726.2 235.2 v.01" stroke="#b4b4b4" stroke-width="1" stroke-linecap="round"/>
</svg>
<span class="lb" style="left:714.4px;top:135.6px;font-size:10px;line-height:11px;color:#555;transform:scaleX(.9);-webkit-text-stroke:.2px #555">%</span>
<span class="lb" style="left:734.8px;top:115.5px;font-size:9.6px;line-height:12px;color:#333;font-weight:normal;transform:scaleX(0.996);">Cle<u>a</u>r All</span>
<span class="lb" style="left:734.5px;top:137.6px;font-size:9.6px;line-height:12px;color:#333;font-weight:normal;transform:scaleX(0.970);">Clear <u>F</u>ormats</span>
<span class="lb" style="left:734.5px;top:160.0px;font-size:9.6px;line-height:12px;color:#333;font-weight:normal;transform:scaleX(0.984);"><u>C</u>lear Contents</span>
<span class="lb" style="left:734.5px;top:182.4px;font-size:9.6px;line-height:12px;color:#333;font-weight:normal;transform:scaleX(0.991);">Clear Co<u>m</u>ments and Notes</span>
<span class="lb" style="left:734.5px;top:204.5px;font-size:9.6px;line-height:12px;color:#333;font-weight:normal;transform:scaleX(0.986);">Clear Hyper<u>l</u>inks</span>
<span class="lb" style="left:734.5px;top:229.4px;font-size:9.6px;line-height:12px;color:#b8b8b8;font-weight:normal;transform:scaleX(0.986);"><u>R</u>emove Hyperlinks</span>
<div style="left:700.6px;top:73.6px;width:56px;height:57px;border-radius:50%;mix-blend-mode:multiply;background:radial-gradient(closest-side,rgb(250,247,150) 0,rgb(250,247,152) 72%,rgb(252,250,190) 88%,rgb(255,255,255) 100%)"></div>
<svg style="left:0;top:0" width="1024" height="260" viewBox="0 0 1024 260">
<path d="M706.6 100.2 L709.7 97.1 L713.7 101.0 L711.1 104.6 Z" fill="#dd8fa0" stroke="#bf4f68" stroke-width="0.9" stroke-linejoin="round"/><path d="M709.7 97.1 L713.7 93.1 L718.1 97.1 L713.7 101.0 Z" fill="#f7f2b4" stroke="#bf4f68" stroke-width="0.9" stroke-linejoin="round"/><path d="M715.9 121.9 L719.0 118.8 L723.0 122.7 L720.4 126.3 Z" fill="#dd8fa0" stroke="#bf4f68" stroke-width="0.9" stroke-linejoin="round"/><path d="M719.0 118.8 L723.0 114.8 L727.4 118.8 L723.0 122.7 Z" fill="#f7f2b4" stroke="#bf4f68" stroke-width="0.9" stroke-linejoin="round"/><path d="M726.4 100.8 V114.6 L729.5 111.8 L731.8 116.6 L733.8 115.6 L731.6 111 H735.6 Z" fill="#fff" stroke="#555" stroke-width="0.7" stroke-linejoin="round"/>
</svg>

<!-- left dark edge -->
<div style="left:0;top:0;width:1.6px;height:521px;background:#151515"></div>
<!-- bottom gradient -->
<div style="left:0;top:336px;width:1024px;height:185px;background:linear-gradient(rgba(0,0,0,0),rgba(0,0,0,.275))"></div>
<div style="left:744px;top:516.4px;width:14px;height:14px;border-radius:50%;background:#e8262d"></div>
</div>
</body>
</html>
